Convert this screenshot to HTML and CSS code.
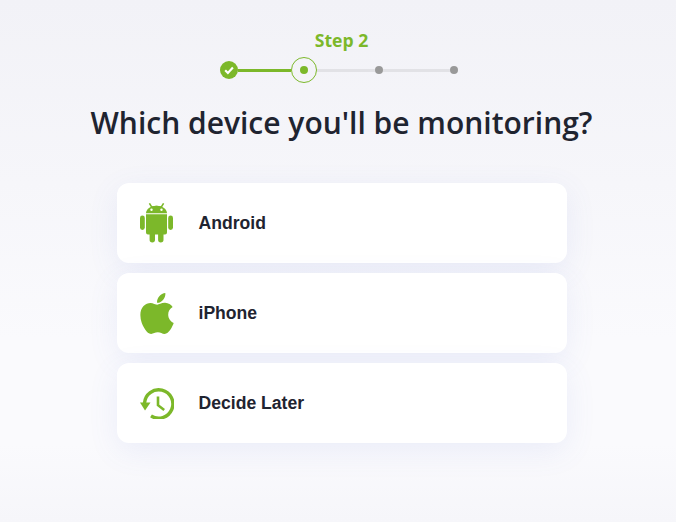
FILE: index.html
```html
<!DOCTYPE html>
<html lang="en">
<head>
<meta charset="UTF-8">
<meta name="viewport" content="width=device-width, initial-scale=1.0">
<title>Choose device</title>
<link rel="stylesheet" href="styles.css">
</head>
<body>

<div class="wizard">
  <div class="step-label">Step 2</div>

  <div class="stepper">
    <span class="dot dot-done">
      <svg viewBox="0 0 12 12" width="12" height="12"><path d="M2.200 6.300 4.900 9 9.900 3.600" fill="none" stroke="#fff" stroke-width="2.200"/></svg>
    </span>
    <span class="line line-done"></span>
    <span class="dot dot-current"><i></i></span>
    <span class="line line-next"></span>
    <span class="dot dot-todo"></span>
    <span class="line line-last"></span>
    <span class="dot dot-todo"></span>
  </div>

  <h1>Which device you'll be monitoring?</h1>

  <div class="options">
    <a class="option" href="#">
      <span class="option-icon">
        <svg viewBox="0 0 34 40" width="34" height="40" fill="#7cb82a">
          <path d="M9.400 0.300 12 4.500A11 11 0 0 1 21 4.500L23.600 0.300" fill="none" stroke="#7cb82a" stroke-width="1.500"/>
          <path d="M6 10.300C6 6.300 10.500 2.800 16.500 2.800S27 6.300 27 10.300Z"/>
          <path d="M6 11.300H27V29.500A2 2 0 0 1 25 31.500H23.500V36.800A2.700 2.700 0 0 1 18.100 36.800V31.500H15V36.800A2.700 2.700 0 0 1 9.600 36.800V31.500H8A2 2 0 0 1 6 29.500Z"/>
          <rect x="0" y="12.500" width="4.800" height="14.500" rx="2.400"/>
          <rect x="28.200" y="12.500" width="4.800" height="14.500" rx="2.400"/>
          <circle cx="11.500" cy="6.800" r="1.200" fill="#fff"/>
          <circle cx="21.500" cy="6.800" r="1.200" fill="#fff"/>
        </svg>
      </span>
      <span class="option-name">Android</span>
    </a>
    <a class="option" href="#">
      <span class="option-icon">
        <svg viewBox="0 32 384 448" width="34" height="41" preserveAspectRatio="none" fill="#7cb82a">
          <path d="M318.700 268.700c-.2-36.700 16.400-64.400 50-84.800-18.800-26.900-47.200-41.700-84.700-44.600-35.500-2.800-74.300 20.700-88.500 20.700-15 0-49.400-19.700-76.400-19.700C63.300 141.200 4 184.800 4 273.500q0 39.300 14.400 81.200c12.800 36.700 59 126.700 107.200 125.200 25.200-.6 43-17.900 75.800-17.900 31.800 0 48.300 17.900 76.400 17.900 48.600-.7 90.400-82.500 102.600-119.300-65.200-30.700-61.700-90-61.700-91.900zm-56.600-164.200c27.300-32.400 24.800-61.900 24-72.500-24.100 1.400-52 16.400-67.900 34.900-17.500 19.800-27.800 44.300-25.600 71.900 26.100 2 49.900-11.400 69.500-34.300z"/>
        </svg>
      </span>
      <span class="option-name">iPhone</span>
    </a>
    <a class="option" href="#">
      <span class="option-icon">
        <svg viewBox="0 0 34 32" width="34" height="32">
          <path d="M4.500 16A14.200 14.200 0 1 1 11 28.900" fill="none" stroke="#7cb82a" stroke-width="3.400"/>
          <path d="M0 15.500H10.500L5 23.500Z" fill="#7cb82a"/>
          <path d="M18 9.500V18.200L24.200 23" fill="none" stroke="#7cb82a" stroke-width="2.600"/>
        </svg>
      </span>
      <span class="option-name">Decide Later</span>
    </a>
  </div>
</div>

</body>
</html>
```

FILE: styles.css
```css
* {
  box-sizing: border-box;
  margin: 0;
  padding: 0;
}

html, body {
  height: 100%;
}

body {
  font-family: "Open Sans", sans-serif;
  background: linear-gradient(180deg, #f2f2f7 0%, #f6f6fa 35%, #fafafd 65%, #fafafd 85%, #f6f6fa 100%);
  color: #1f2430;
  overflow: hidden;
}

.wizard {
  display: flex;
  flex-direction: column;
  align-items: center;
  padding: 29px 0 0 7px;
}

.step-label {
  font-size: 17.600px;
  line-height: 23px;
  font-weight: 700;
  color: #7cb82a;
}

/* Barra de pasos */
.stepper {
  display: flex;
  align-items: center;
  margin: 5px 5px 0 0;
  height: 26px;
}

.line {
  height: 3px;
  background-color: #e2e2e6;
}

.line-done {
  width: 53px;
  background-color: #7cb82a;
}

.line-next {
  width: 58px;
}

.line-last {
  width: 67px;
}

.dot {
  display: flex;
  align-items: center;
  justify-content: center;
  flex: none;
  border-radius: 50%;
}

.dot-done {
  width: 18px;
  height: 18px;
  background-color: #7cb82a;
}

.dot-current {
  width: 26px;
  height: 26px;
  border: 1px solid #7cb82a;
}

.dot-current i {
  width: 8px;
  height: 8px;
  border-radius: 50%;
  background-color: #7cb82a;
}

.dot-todo {
  width: 8px;
  height: 8px;
  background-color: #999;
}

h1 {
  margin-top: 19px;
  font-size: 30px;
  line-height: 41px;
  font-weight: 600;
  color: #1f2430;
  white-space: nowrap;
}

.options {
  display: flex;
  flex-direction: column;
  gap: 10px;
  width: 450px;
  margin-top: 40px;
}

.option {
  display: flex;
  align-items: center;
  height: 80px;
  padding-left: 23px;
  background-color: #fff;
  border-radius: 12px;
  box-shadow: 0 8px 30px rgba(100, 120, 210, 0.1);
  text-decoration: none;
}

.option-icon {
  display: flex;
  justify-content: center;
  width: 34px;
  margin-right: 25px;
}

.option-name {
  font-family: "Liberation Sans", Arial, sans-serif;
  font-size: 17.600px;
  font-weight: 700;
  color: #1f2430;
}
```
